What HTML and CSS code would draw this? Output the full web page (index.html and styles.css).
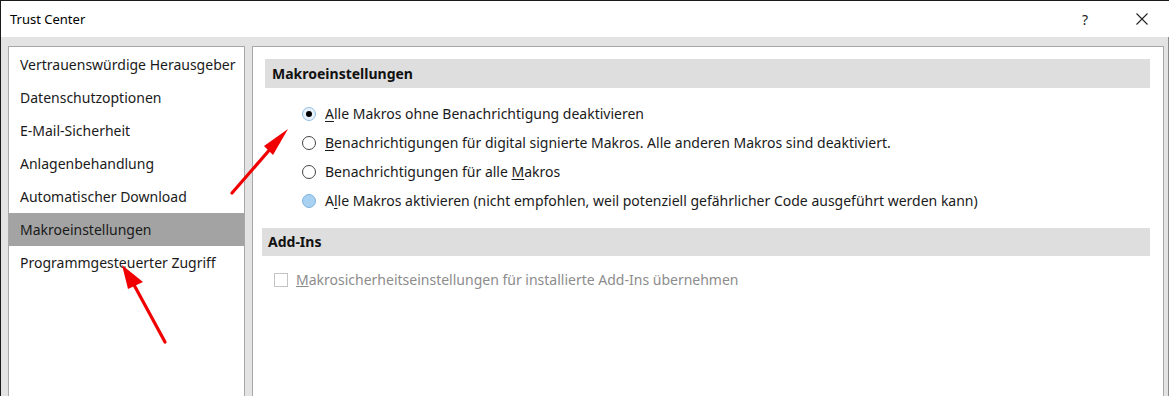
FILE: index.html
```html
<!DOCTYPE html>
<html lang="de">
<head>
    <meta charset="UTF-8">
    <title>Trust Center</title>
    <link rel="stylesheet" href="styles.css">
</head>
<body>
    <div class="dialog">
        <!-- Title bar -->
        <div class="titlebar">
            <span class="title">Trust Center</span>
            <span class="help">?</span>
            <svg class="close" width="12" height="12" viewBox="0 0 12 12">
                <path d="M0.5 0.5 L11.5 11.5 M11.5 0.5 L0.5 11.5" stroke="#222" stroke-width="1.1" fill="none"/>
            </svg>
        </div>

        <div class="content">
            <!-- Category list -->
            <ul class="nav">
                <li>Vertrauenswürdige Herausgeber</li>
                <li>Datenschutzoptionen</li>
                <li>E-Mail-Sicherheit</li>
                <li>Anlagenbehandlung</li>
                <li>Automatischer Download</li>
                <li class="active">Makroeinstellungen</li>
                <li>Programmgesteuerter Zugriff</li>
            </ul>

            <!-- Settings pane -->
            <div class="pane">
                <h3 class="section first">Makroeinstellungen</h3>
                <div class="options">
                    <div class="option">
                        <span class="radio focused"></span>
                        <span><u>A</u>lle Makros ohne Benachrichtigung deaktivieren</span>
                    </div>
                    <div class="option">
                        <span class="radio"></span>
                        <span><u>B</u>enachrichtigungen für digital signierte Makros. Alle anderen Makros sind deaktiviert.</span>
                    </div>
                    <div class="option">
                        <span class="radio"></span>
                        <span>Benachrichtigungen für alle <u>M</u>akros</span>
                    </div>
                    <div class="option">
                        <span class="radio hover"></span>
                        <span>A<u>l</u>le Makros aktivieren (nicht empfohlen, weil potenziell gefährlicher Code ausgeführt werden kann)</span>
                    </div>
                </div>

                <h3 class="section second">Add-Ins</h3>
                <div class="check-row">
                    <span class="checkbox"></span>
                    <span><u>M</u>akrosicherheitseinstellungen für installierte Add-Ins übernehmen</span>
                </div>
            </div>
        </div>

        <!-- Red annotation arrows -->
        <svg class="arrows" width="1171" height="396" viewBox="0 0 1171 396">
            <line x1="232" y1="193" x2="272" y2="147" stroke="#f00000" stroke-width="3.2" stroke-linecap="round"/>
            <polygon points="288,129 264,146 273,155" fill="#f00000"/>
            <line x1="165" y1="342" x2="133" y2="283" stroke="#f00000" stroke-width="3.2" stroke-linecap="round"/>
            <polygon points="122,265 128,289 143,282" fill="#f00000"/>
        </svg>
    </div>
</body>
</html>
```

FILE: styles.css
```css
body {
    margin: 0;
    padding: 0;
    width: 1171px;
    height: 396px;
    overflow: hidden;
    background-color: #ffffff;
    font-family: 'Noto Sans', 'Open Sans', sans-serif;
    color: #1a1a1a;
}

.dialog {
    position: relative;
    width: 1169px;
    height: 396px;
    border-top: 1px solid #1a1a1a;
    border-left: 1px solid #1a1a1a;
    box-sizing: border-box;
    display: flex;
    flex-direction: column;
}

/* Title bar */
.titlebar {
    height: 36px;
    display: flex;
    align-items: center;
    padding-left: 9px;
    background-color: #ffffff;
    flex-shrink: 0;
}

.title {
    font-size: 13px;
    color: #000000;
    flex-grow: 1;
}

.help {
    font-size: 14px;
    color: #222;
    margin-right: 48px;
}

.close {
    margin-right: 21px;
}

/* Content area */
.content {
    flex-grow: 1;
    display: flex;
    gap: 7px;
    padding: 9px 4px 0 7px;
    background-color: #e3e3e3;
    border-right: 1px solid #8a8a8a;
    min-height: 0;
}

.nav {
    list-style: none;
    margin: 0;
    padding: 1px 0 0 0;
    width: 235px;
    background-color: #ffffff;
    border: 1px solid #a8a8a8;
    border-bottom: none;
    font-size: 14px;
}

.nav li {
    height: 33px;
    line-height: 33px;
    padding-left: 11px;
}

.nav li.active {
    background-color: #a3a3a3;
}

.pane {
    flex-grow: 1;
    background-color: #ffffff;
    border: 1px solid #a8a8a8;
    border-bottom: none;
    padding: 12px 13px 0 12px;
}

.section {
    margin: 0;
    height: 29px;
    line-height: 29px;
    padding-left: 7px;
    background-color: #dedede;
    font-size: 14px;
    font-weight: 700;
    color: #111;
}

.section.second {
    height: 28px;
    line-height: 28px;
    margin-left: -3px;
    padding-left: 6px;
}

.options {
    padding: 11px 0 13px 37px;
}

.option {
    height: 29px;
    display: flex;
    align-items: center;
    gap: 9px;
    font-size: 14px;
}

.option u {
    text-underline-offset: 2px;
}

.radio {
    width: 12px;
    height: 12px;
    border: 1px solid #444;
    border-radius: 50%;
    background-color: #ffffff;
    position: relative;
    flex-shrink: 0;
}

.radio.focused {
    border-color: #8fbfe6;
    background-color: #e6f1fb;
}

.radio.focused:after {
    content: "";
    position: absolute;
    top: 3px;
    left: 3px;
    width: 6px;
    height: 6px;
    border-radius: 50%;
    background-color: #000;
}

.radio.hover {
    border-color: #7fb2dd;
    background-color: #a9d2f2;
}

.check-row {
    display: flex;
    align-items: center;
    gap: 8px;
    padding: 14px 0 0 9px;
    font-size: 14px;
    color: #8c8c8c;
}

.checkbox {
    width: 12px;
    height: 12px;
    border: 1px solid #c4c4c4;
    flex-shrink: 0;
}

/* Annotation overlay */
.arrows {
    position: absolute;
    top: -1px;
    left: -1px;
    pointer-events: none;
}
```
